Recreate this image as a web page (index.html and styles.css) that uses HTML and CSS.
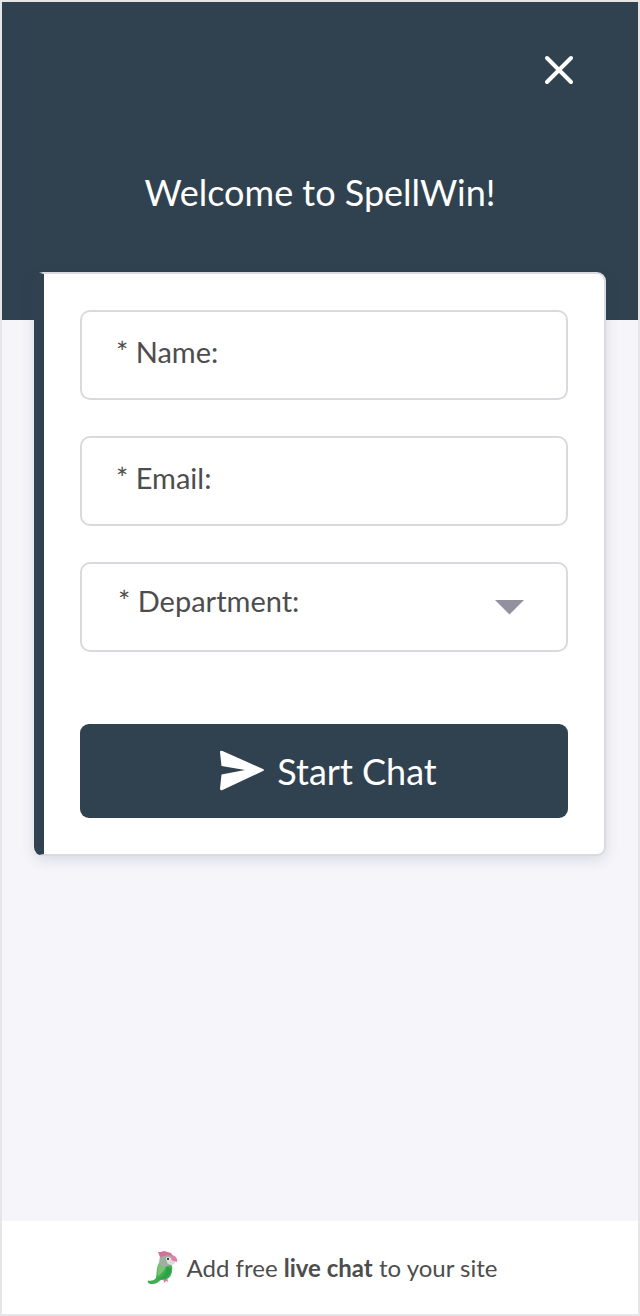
FILE: index.html
```
<!DOCTYPE html>
<html lang="en">
<head>
    <meta charset="UTF-8">
    <meta name="viewport" content="width=device-width, initial-scale=1.0">
    <title>SpellWin chat</title>
    <link rel="stylesheet" href="styles.css">
</head>
<body>
    <div class="widget">
        <header class="header">
            <button type="button" class="close" aria-label="Close">
                <svg width="30" height="30" viewBox="0 0 30 30">
                    <path d="M3 3L27 27M27 3L3 27" stroke="#fff" stroke-width="4" stroke-linecap="round"/>
                </svg>
            </button>
            <h1>Welcome to SpellWin!</h1>
        </header>
        <main class="content">
            <form class="card">
                <input class="field" type="text" name="name" placeholder="* Name:" aria-label="Name" required>
                <input class="field" type="email" name="email" placeholder="* Email:" aria-label="Email" required>
                <div class="select-wrap">
                    <select class="field" name="department" aria-label="Department" required>
                        <option value="" selected>* Department:</option>
                        <option value="support">Support</option>
                        <option value="sales">Sales</option>
                    </select>
                    <svg class="arrow" width="30" height="15" viewBox="0 0 30 15">
                        <path d="M1 0H30L15.500 14.500Z" fill="#9391a0"/>
                    </svg>
                </div>
                <button type="submit" class="start">
                    <svg width="46" height="42" viewBox="0 0 46 42">
                        <path d="M1 2Q1 0 3.500 1L44 19Q46 20 44 21L3.500 40Q1 41 1 38.500L2.500 24.500L26 20L2.500 16Z" fill="#fff"/>
                    </svg>
                    <span>Start Chat</span>
                </button>
            </form>
        </main>
        <footer class="footer">
            <svg width="32" height="34" viewBox="0 0 32 34">
                <path d="M16 27L17 32L19 30L21 31L20 26Z" fill="#d47fa6"/>
                <path d="M12 12C9 17 10 23 9 27C7 30 3 30 1 29.500C0 32 2 33 6 33C10 33 12 30 14 29C22 29 25 25 25 19C26 15 24 12 21 11Z" fill="#3fae50"/>
                <path d="M13 10C10 15 10 21 11 25C14 23 19 19 19 13Z" fill="#79c474"/>
                <path d="M19 15C21 20 16 27 11 28C16 29 24 26 24 18Z" fill="#2fa048"/>
                <path d="M13 5C17 2 24 2 26 6C28 11 25 15 21 15C17 17 13 15 12 12Z" fill="#9eae9f"/>
                <path d="M20 9C23 5 27 7 28 12C26 15 22 14 20 12Z" fill="#dedbd6"/>
                <path d="M11 1L14 1L17 0L24 2L26 5C20 3 17 5 13 6Z" fill="#d66d9d"/>
                <path d="M25 4C29 5 31 8 30 11C28 10 26 11 24 8Z" fill="#e27fa9"/>
                <circle cx="21" cy="8" r="2" fill="#fff"/>
                <circle cx="21" cy="8" r="1.200" fill="#343d39"/>
            </svg>
            <p>Add free <a href="#">live chat</a> to your site</p>
        </footer>
    </div>
</body>
</html>
```
FILE: styles.css
```
* {
    box-sizing: border-box;
}
body {
    margin: 0;
    font-family: Lato, "Liberation Sans", sans-serif;
    color: #4d4d4d;
}
.widget {
    display: flex;
    flex-direction: column;
    min-height: 100vh;
    border: 2px solid #e6e6e8;
    background-color: #f5f5fa;
}
.header {
    display: flex;
    flex-direction: column;
    padding: 53px 64px 104px;
    background-color: #30424f;
    color: #fff;
}
.close {
    align-self: flex-end;
    display: flex;
    padding: 0;
    border: none;
    background: none;
    cursor: pointer;
}
h1 {
    margin: 83px 0 0;
    font-size: 36px;
    font-weight: 400;
    line-height: 48px;
    text-align: center;
}
.content {
    flex: 1;
    margin-top: -48px;
    padding: 0 32px;
}
.card {
    display: flex;
    flex-direction: column;
    gap: 36px;
    padding: 36px;
    border: 2px solid #dadae2;
    border-left: 10px solid #30424f;
    border-radius: 9px;
    background-color: #fff;
    box-shadow: 0 4px 14px rgba(60, 60, 90, 0.14);
}
.field {
    display: block;
    width: 100%;
    height: 90px;
    padding: 0 34px 8px;
    border: 2px solid #dadade;
    border-radius: 10px;
    background-color: #fff;
    color: #4d4d4d;
    font-family: inherit;
    font-size: 29px;
}
.field::placeholder {
    color: #4d4d4d;
    opacity: 1;
}
.select-wrap {
    position: relative;
}
select.field {
    padding: 0 36px 14px;
    appearance: none;
}
.arrow {
    position: absolute;
    top: 38px;
    right: 44px;
    pointer-events: none;
}
.start {
    display: flex;
    align-items: center;
    justify-content: center;
    gap: 12px;
    height: 94px;
    margin-top: 36px;
    padding: 0 0 0 8px;
    border: none;
    border-radius: 9px;
    background-color: #30424f;
    color: #fff;
    font-family: inherit;
    font-size: 36px;
    cursor: pointer;
}
.footer {
    display: flex;
    align-items: center;
    justify-content: center;
    gap: 8px;
    height: 93px;
    padding-left: 4px;
    background-color: #fff;
    font-size: 24px;
}
.footer p {
    margin: 0;
}
.footer a {
    color: inherit;
    font-weight: 700;
    text-decoration: none;
}
```
